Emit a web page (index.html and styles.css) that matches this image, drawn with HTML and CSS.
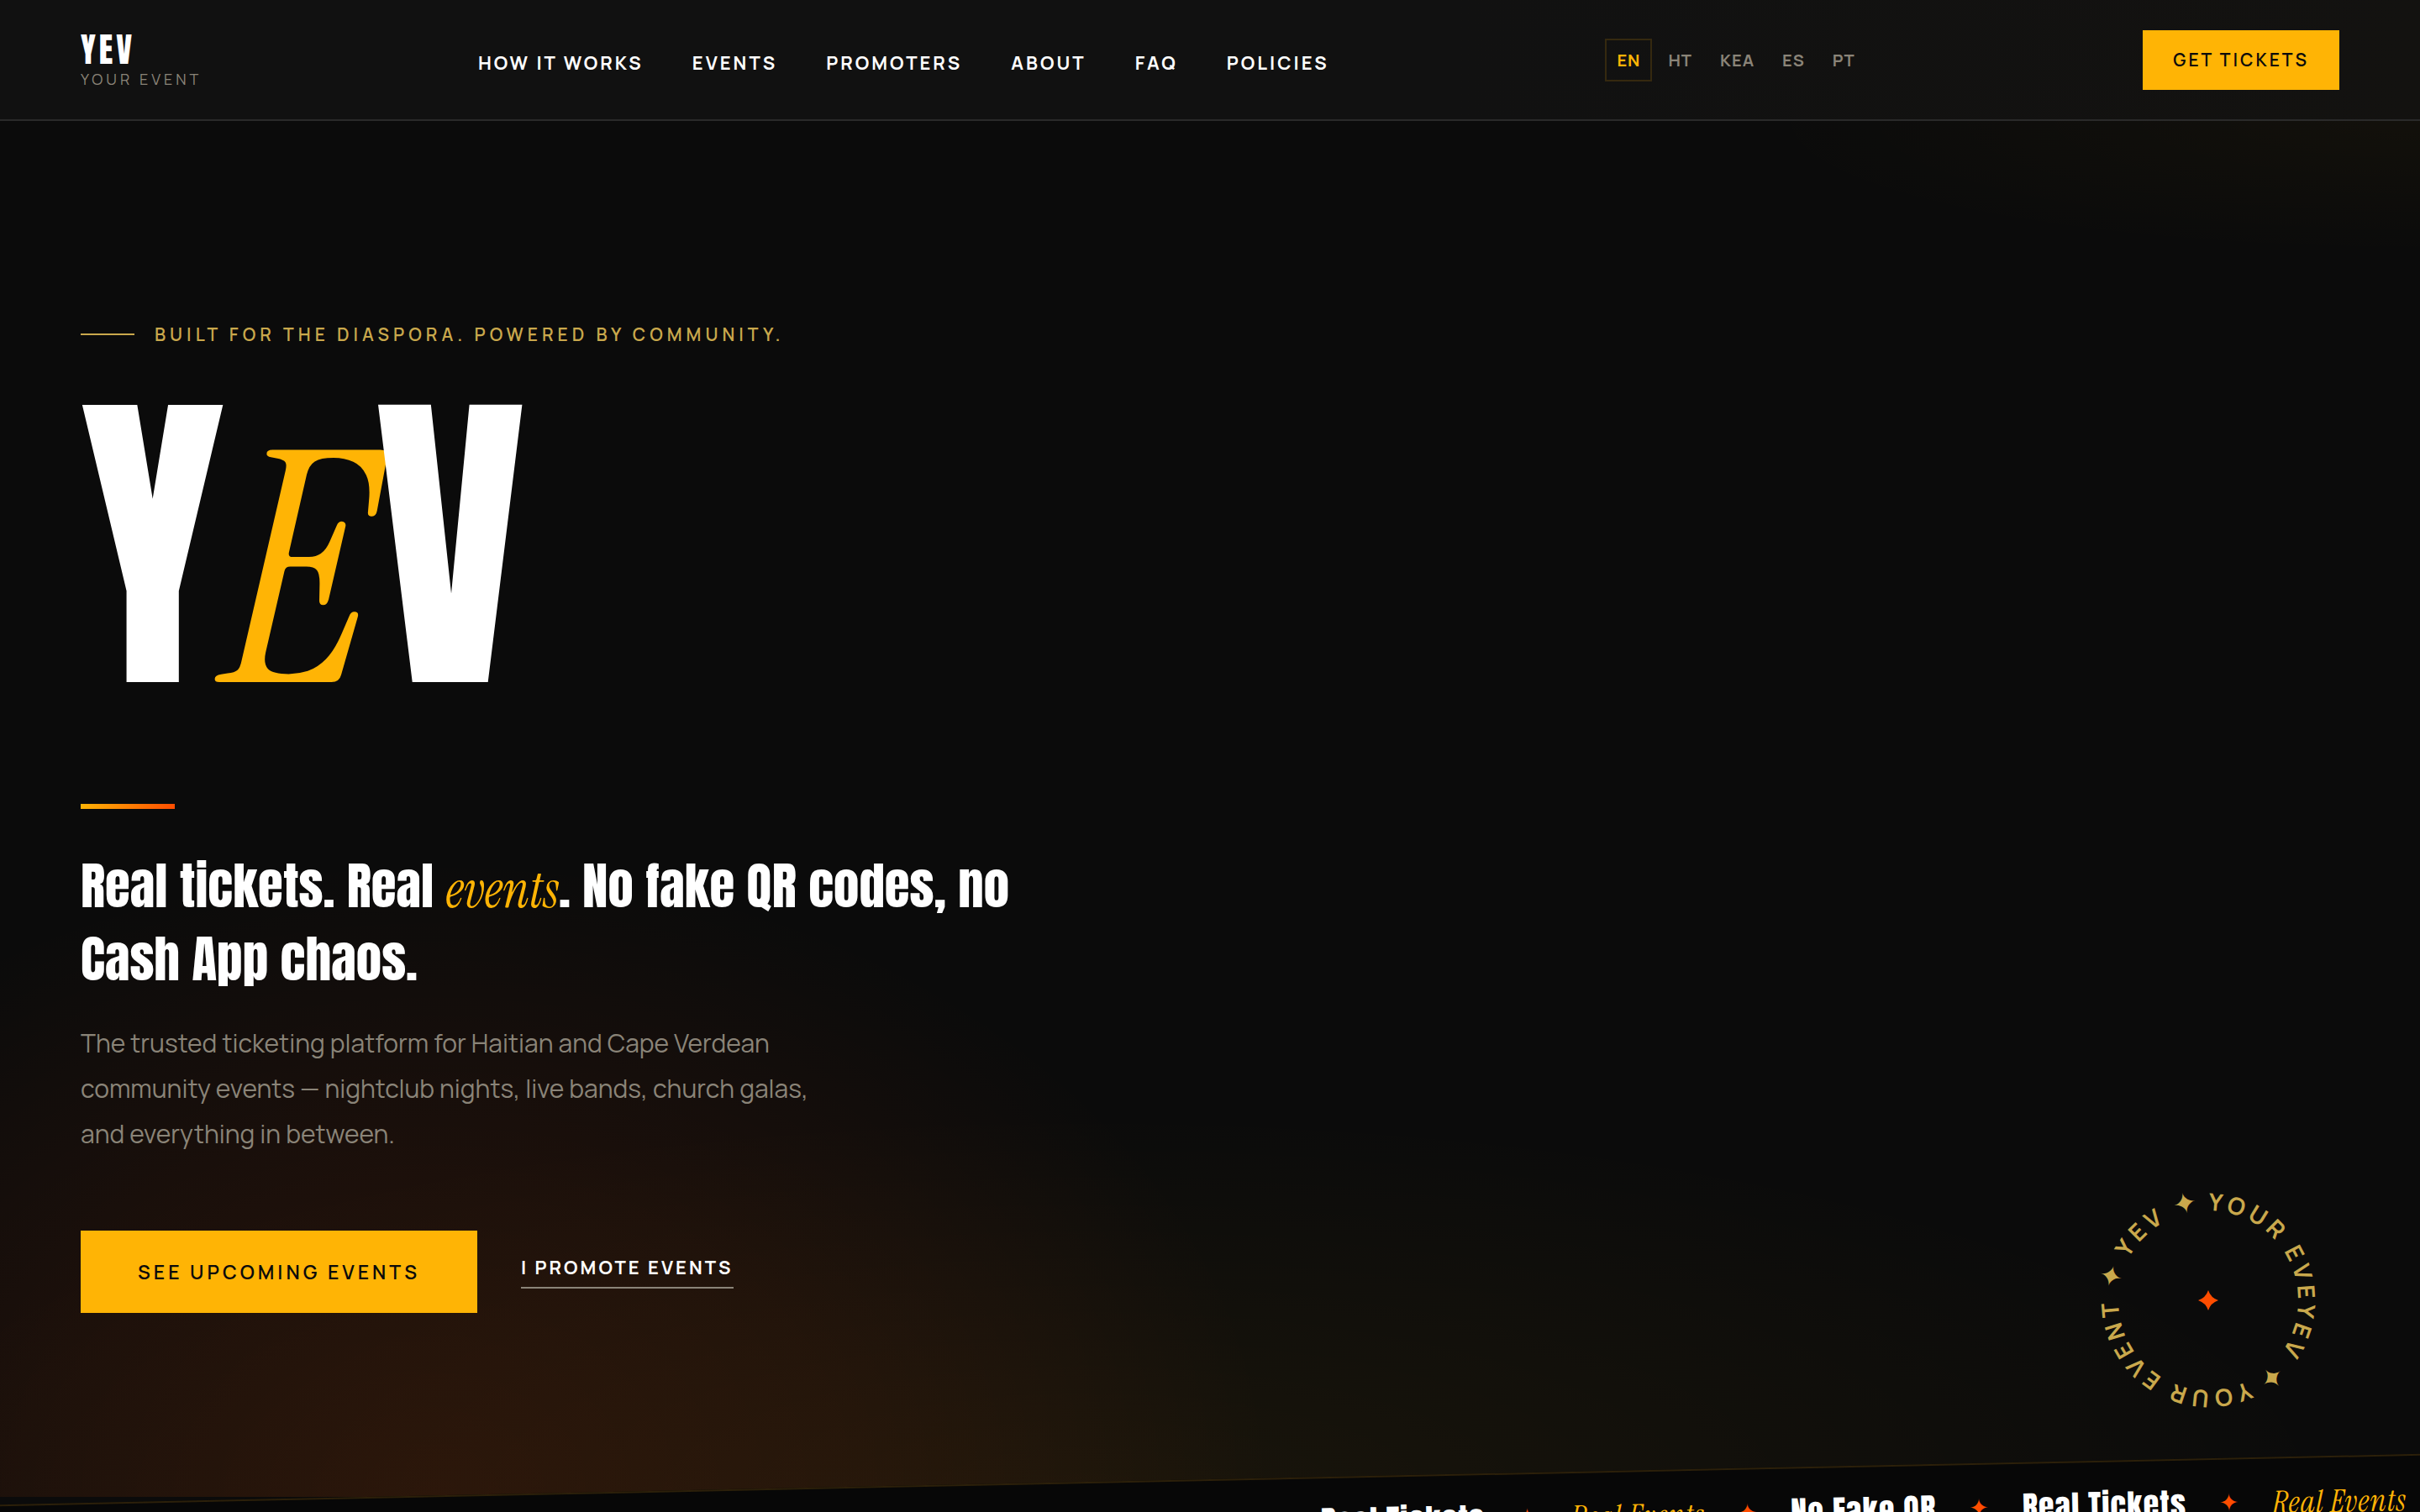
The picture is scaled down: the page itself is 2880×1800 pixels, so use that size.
FILE: index.html
```html
<!DOCTYPE html>
<html lang="en">
<head>
    <meta charset="UTF-8">
    <meta name="viewport" content="width=device-width, initial-scale=1.0">
    <title>YEV - Your Event</title>
    <link rel="stylesheet" href="styles.css">
</head>
<body>
    <!-- Navigation -->
    <header class="nav">
        <a href="#" class="logo">
            <span class="logo-name">YEV</span>
            <span class="logo-sub">Your Event</span>
        </a>
        <nav class="nav-links">
            <a href="#how">How It Works</a>
            <a href="#events">Events</a>
            <a href="#promoters">Promoters</a>
            <a href="#about">About</a>
            <a href="#faq">FAQ</a>
            <a href="#policies">Policies</a>
        </nav>
        <div class="lang">
            <button class="active">EN</button>
            <button>HT</button>
            <button>KEA</button>
            <button>ES</button>
            <button>PT</button>
        </div>
        <a href="#tickets" class="nav-cta">Get Tickets</a>
    </header>

    <!-- Hero -->
    <section class="hero">
        <p class="eyebrow">Built for the diaspora. Powered by community.</p>
        <h1 class="hero-title">Y<em>E</em>V</h1>
        <div class="divider"></div>
        <h2 class="tagline">Real tickets. Real <em>events</em>. No fake QR codes, no<br>Cash App chaos.</h2>
        <p class="lead">The trusted ticketing platform for Haitian and Cape Verdean<br>community events — nightclub nights, live bands, church galas,<br>and everything in between.</p>
        <div class="actions">
            <a href="#events" class="btn-primary">See Upcoming Events</a>
            <a href="#promoters" class="btn-link">I Promote Events</a>
        </div>

        <svg class="badge" viewBox="0 0 280 280">
            <defs>
                <path id="ring" d="M247 144 A107 107 0 1 1 247 138"/>
            </defs>
            <text class="badge-text"><textPath href="#ring">YEV <tspan class="badge-mark">✦</tspan> YOUR EVENT <tspan class="badge-mark">✦</tspan> YEV <tspan class="badge-mark">✦</tspan> YOUR EVE</textPath></text>
            <path class="badge-star" d="M140 129 Q143 138 152 141 Q143 144 140 153 Q137 144 128 141 Q137 138 140 129Z"/>
        </svg>
    </section>

    <!-- Ticker -->
    <div class="ticker">
        <div class="ticker-track">
            <span>Real Tickets</span><i>✦</i>
            <em>Real Events</em><i>✦</i>
            <span>No Fake QR</span><i>✦</i>
            <span>Real Tickets</span><i>✦</i>
            <em>Real Events</em>
        </div>
    </div>
</body>
</html>
```
FILE: styles.css
```css
:root {
    --gold: #ffb405;
    --sand: #c9a84c;
    --fire: #ff4d00;
    --muted: #8a8478;
    --black: #0b0b0b;
    --display: "Anton", "Liberation Sans Narrow", "Liberation Sans", sans-serif;
    --serif: "Instrument Serif", "Liberation Serif", serif;
    --body: "Manrope", "DejaVu Sans", sans-serif;
}

* {
    box-sizing: border-box;
    margin: 0;
    padding: 0;
}

body {
    background-color: var(--black);
    color: #fff;
    font-family: var(--body);
    overflow: hidden;
}

a {
    color: inherit;
    text-decoration: none;
}

/* Navigation */
.nav {
    display: flex;
    justify-content: space-between;
    align-items: center;
    height: 144px;
    padding: 0 96px;
    background: linear-gradient(90deg, #111 60%, #131210);
    border-bottom: 2px solid #2a2a2a;
}

.logo {
    display: flex;
    flex-direction: column;
}

.logo-name {
    font-family: var(--display);
    font-size: 40px;
    line-height: 45px;
    letter-spacing: 4px;
}

.logo-sub {
    color: var(--muted);
    font-size: 18px;
    line-height: 24px;
    letter-spacing: 4px;
    text-transform: uppercase;
}

.nav-links {
    display: flex;
    gap: 58px;
    padding-top: 8px;
    font-size: 22px;
    font-weight: 700;
    letter-spacing: 3px;
    text-transform: uppercase;
}

.lang {
    display: flex;
    gap: 5px;
}

.lang button {
    height: 51px;
    padding: 0 12px;
    background: none;
    border: 2px solid transparent;
    color: var(--muted);
    font-family: var(--body);
    font-size: 20px;
    font-weight: 700;
    letter-spacing: 1px;
}

.lang button.active {
    color: var(--gold);
    border-color: #35290f;
}

.nav-cta {
    padding: 0 36px;
    background-color: var(--gold);
    color: var(--black);
    font-size: 21px;
    font-weight: 600;
    line-height: 71px;
    letter-spacing: 3px;
    text-transform: uppercase;
}

/* Hero */
.hero {
    position: relative;
    padding: 236px 96px 219px;
    background:
        radial-gradient(ellipse 1000px 760px at 18% 100%, rgba(255, 80, 5, 0.11), rgba(255, 80, 5, 0.07) 50%, transparent),
        radial-gradient(ellipse 1500px 460px at 45% 100%, rgba(255, 180, 5, 0.06), transparent),
        radial-gradient(ellipse 800px 160px at 100% 0%, rgba(255, 180, 5, 0.03), transparent);
}

.eyebrow {
    display: flex;
    align-items: center;
    gap: 24px;
    color: var(--sand);
    font-size: 21px;
    font-weight: 600;
    line-height: 36px;
    letter-spacing: 5px;
    text-transform: uppercase;
}

.eyebrow::before {
    content: "";
    width: 64px;
    height: 2px;
    background-color: var(--sand);
}

.hero-title {
    margin-top: 33px;
    font-family: var(--display);
    font-size: 384px;
    font-weight: normal;
    line-height: 400px;
    letter-spacing: 2px;
}

.hero-title em {
    color: var(--gold);
    font-family: var(--serif);
    line-height: 1px;
}

.divider {
    width: 112px;
    height: 6px;
    margin-top: 108px;
    background: linear-gradient(90deg, var(--gold), var(--fire));
}

.tagline {
    margin-top: 48px;
    font-family: var(--display);
    font-size: 61px;
    font-weight: normal;
    line-height: 87px;
}

.tagline em {
    color: var(--gold);
    font-family: var(--serif);
    line-height: 1px;
}

.lead {
    margin-top: 30px;
    color: var(--muted);
    font-size: 30px;
    line-height: 54px;
}

.actions {
    display: flex;
    align-items: center;
    gap: 52px;
    margin-top: 88px;
}

.btn-primary {
    padding: 0 68px;
    background-color: var(--gold);
    color: var(--black);
    font-size: 23px;
    font-weight: 600;
    line-height: 98px;
    letter-spacing: 4px;
    text-transform: uppercase;
}

.btn-link {
    padding-bottom: 8px;
    border-bottom: 2px solid var(--muted);
    font-size: 22px;
    font-weight: 700;
    line-height: 30px;
    letter-spacing: 3px;
    text-transform: uppercase;
}

/* Round badge in the hero corner */
.badge {
    position: absolute;
    right: 112px;
    bottom: 95px;
    width: 280px;
    height: 280px;
}

.badge-text {
    fill: var(--sand);
    font-size: 28px;
    font-weight: 700;
    letter-spacing: 5px;
}

.badge-mark {
    font-family: "DejaVu Sans", sans-serif;
    font-size: 34px;
    letter-spacing: 0;
}

.badge-star {
    fill: var(--fire);
}

/* Ticker */
.ticker {
    position: relative;
    width: 110%;
    margin: -21px -5% 0;
    padding: 28px 0;
    background-color: #070707;
    border-top: 2px solid #2c200a;
    border-bottom: 2px solid #2c200a;
    transform: rotate(-1.2deg);
}

.ticker-track {
    display: flex;
    justify-content: flex-end;
    align-items: center;
    gap: 39px;
    padding-right: 160px;
    font-family: var(--display);
    font-size: 38px;
    line-height: 48px;
    letter-spacing: 1px;
    white-space: nowrap;
}

.ticker-track em {
    color: var(--gold);
    font-family: var(--serif);
    font-size: 37px;
}

.ticker-track i {
    color: var(--fire);
    font-family: "DejaVu Sans", sans-serif;
    font-style: normal;
    font-size: 28px;
}
```
